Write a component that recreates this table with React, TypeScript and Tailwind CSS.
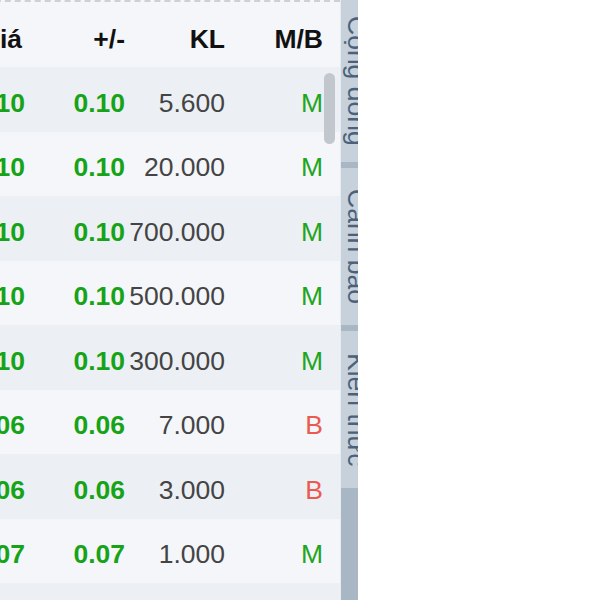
import React from "react";

type Trade = {
    price: string;
    change: string;
    volume: string;
    side: "M" | "B";
};

const trades: Trade[] = [
    {price: "23.10", change: "0.10", volume: "5.600", side: "M"},
    {price: "23.10", change: "0.10", volume: "20.000", side: "M"},
    {price: "23.10", change: "0.10", volume: "700.000", side: "M"},
    {price: "23.10", change: "0.10", volume: "500.000", side: "M"},
    {price: "23.10", change: "0.10", volume: "300.000", side: "M"},
    {price: "23.06", change: "0.06", volume: "7.000", side: "B"},
    {price: "23.06", change: "0.06", volume: "3.000", side: "B"},
    {price: "23.07", change: "0.07", volume: "1.000", side: "M"},
    {price: "23.07", change: "0.07", volume: "2.000", side: "M"},
];

const tabs = ["Cộng đồng", "Cảnh báo", "Kiến thức"];

function TradeRow({trade, index}: { trade: Trade; index: number }) {
    const bg = index % 2 === 0 ? "bg-[#ecf0f4]" : "bg-[#f4f6f9]";
    return (
        <div className={`grid grid-cols-[100px_100px_100px_100px] h-[64.5px] items-center pt-[7px] ${bg}`}>
            <div className="text-right font-bold text-[#17a317]">{trade.price}</div>
            <div className="text-right font-bold text-[#17a317]">{trade.change}</div>
            <div className="text-right text-[#444]">{trade.volume}</div>
            <div className={`text-right pr-[2px] ${trade.side === "M" ? "text-[#1fa51f]" : "text-[#ea5a50]"}`}>
                {trade.side}
            </div>
        </div>
    );
}

export default function App() {
    return (
        <div className="w-[600px] h-[600px] bg-white">
            <div className="flex w-[358px] h-[600px] overflow-hidden font-['Liberation_Sans',Arial,sans-serif] text-[26.5px] leading-[1.15]">
                <div className="relative w-[340px] shrink-0 overflow-hidden bg-[#f4f6f9]">
                    <div className="ml-[-75px] w-[415px]">
                        <div className="grid grid-cols-[100px_100px_100px_100px] h-[67px] items-center pt-[10px] border-t-2 border-dashed border-[#cdd1d7] bg-[#f4f6f9] font-bold text-[#111]">
                            <div className="text-right pr-[3px]">Giá</div>
                            <div className="text-right">+/-</div>
                            <div className="text-right">KL</div>
                            <div className="text-right pr-[2px]">M/B</div>
                        </div>
                        {trades.map((t, i) => (
                            <TradeRow key={i} trade={t} index={i}/>
                        ))}
                    </div>
                    {/* scrollbar thumb */}
                    <div className="absolute left-[324px] top-[73px] w-[11px] h-[71px] rounded-full bg-[#c2c7ce]"/>
                </div>
                <div className="flex flex-col w-[40px] shrink-0 border-l border-[#e6ebf0] bg-[#a9b6c4]">
                    {tabs.map((tab, i) => (
                        <div
                            key={tab}
                            className={`flex h-[157px] shrink-0 items-center justify-start pl-[2px] bg-[#c6d1dc] ${i > 0 ? "mt-[6px]" : "h-[162px]"}`}
                        >
                            <span className="[writing-mode:vertical-rl] leading-none whitespace-nowrap text-[#4b6179]">
                                {tab}
                            </span>
                        </div>
                    ))}
                </div>
            </div>
        </div>
    );
}
